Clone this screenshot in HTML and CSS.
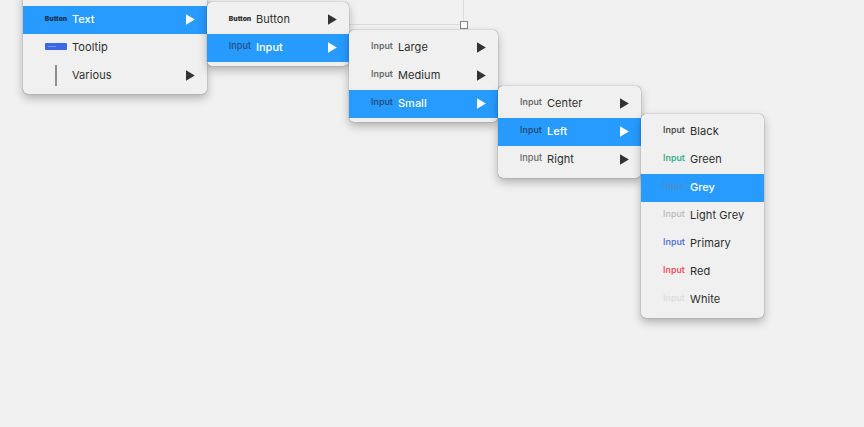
FILE: index.html
```html
<!DOCTYPE html>
<html lang="en">
<head>
<meta charset="utf-8">
<title>Symbol menu</title>
<link rel="stylesheet" href="styles.css">
</head>
<body>
<svg class="arrow-def" width="0" height="0"><symbol id="arrow" viewBox="0 0 9 11"><path d="M0 .3 8.8 5.5 0 10.7Z" fill="currentColor"/></symbol></svg>
<main class="canvas">
  <div class="artboard"><i class="handle"></i></div>

  <ul class="menu menu-root">
    <li class="sliver"></li>
    <li class="item selected"><span class="thumb bold">Button</span><span class="label">Text</span><svg class="arrow"><use href="#arrow"/></svg></li>
    <li class="item"><span class="thumb shape"><i class="tooltip-preview"></i></span><span class="label">Tooltip</span></li>
    <li class="item"><span class="thumb shape"><i class="divider-preview"></i></span><span class="label">Various</span><svg class="arrow"><use href="#arrow"/></svg></li>
  </ul>

  <ul class="menu menu-text">
    <li class="item"><span class="thumb bold">Button</span><span class="label">Button</span><svg class="arrow"><use href="#arrow"/></svg></li>
    <li class="item selected"><span class="thumb large">Input</span><span class="label">Input</span><svg class="arrow"><use href="#arrow"/></svg></li>
  </ul>

  <ul class="menu menu-size">
    <li class="item"><span class="thumb">Input</span><span class="label">Large</span><svg class="arrow"><use href="#arrow"/></svg></li>
    <li class="item"><span class="thumb">Input</span><span class="label">Medium</span><svg class="arrow"><use href="#arrow"/></svg></li>
    <li class="item selected"><span class="thumb">Input</span><span class="label">Small</span><svg class="arrow"><use href="#arrow"/></svg></li>
  </ul>

  <ul class="menu menu-align">
    <li class="item"><span class="thumb">Input</span><span class="label">Center</span><svg class="arrow"><use href="#arrow"/></svg></li>
    <li class="item selected"><span class="thumb">Input</span><span class="label">Left</span><svg class="arrow"><use href="#arrow"/></svg></li>
    <li class="item"><span class="thumb large">Input</span><span class="label">Right</span><svg class="arrow"><use href="#arrow"/></svg></li>
  </ul>

  <ul class="menu menu-color">
    <li class="item"><span class="thumb black">Input</span><span class="label">Black</span></li>
    <li class="item"><span class="thumb green">Input</span><span class="label">Green</span></li>
    <li class="item selected"><span class="thumb grey">Input</span><span class="label">Grey</span></li>
    <li class="item"><span class="thumb light-grey">Input</span><span class="label">Light Grey</span></li>
    <li class="item"><span class="thumb primary">Input</span><span class="label">Primary</span></li>
    <li class="item"><span class="thumb red">Input</span><span class="label">Red</span></li>
    <li class="item"><span class="thumb white">Input</span><span class="label">White</span></li>
  </ul>
</main>
</body>
</html>
```
FILE: styles.css
```css
* { box-sizing: border-box; }
body {
  margin: 0;
  background: #f1f1f1;
  font-family: Inter, "Liberation Sans", sans-serif;
  color: #2e2e2e;
}
.arrow-def { position: absolute; }
.canvas { position: relative; width: 864px; height: 427px; overflow: hidden; }

.artboard {
  position: absolute;
  left: 200px;
  top: -10px;
  width: 264px;
  height: 35px;
  border: solid #dcdcdc;
  border-width: 0 1px 1px 0;
}
.handle {
  position: absolute;
  right: -5px;
  bottom: -5px;
  width: 8px;
  height: 8px;
  background: #fff;
  border: 1px solid #888;
}

.menu {
  position: absolute;
  margin: 0;
  padding: 4px 0;
  list-style: none;
  background: #f0f0f0;
  border-radius: 5px;
  box-shadow: 0 0 1px rgba(0, 0, 0, .6), 0 4px 10px rgba(0, 0, 0, .28);
}
.menu-root { left: 23px; top: -10px; width: 184px; padding-top: 0; }
.menu-text { left: 207px; top: 2px; width: 142px; }
.menu-size { left: 349px; top: 30px; width: 149px; }
.menu-align { left: 498px; top: 86px; width: 143px; }
.menu-color { left: 641px; top: 114px; width: 123px; }

.sliver { height: 16px; }
.item {
  display: flex;
  align-items: center;
  height: 28px;
  padding: 0 12px 0 22px;
}
.item.selected { background: #279bff; }
.thumb {
  display: flex;
  justify-content: center;
  align-items: center;
  width: 22px;
  height: 20px;
  margin-right: 5px;
  padding-bottom: 5px;
  font-size: 8.8px;
  font-weight: 600;
  color: #6a6a6a;
}
.thumb.shape { padding-bottom: 3px; }
.selected .thumb { color: #235180; }
.thumb.large { font-size: 9.2px; font-weight: 500; }
.thumb.bold { font-size: 6.7px; font-weight: 900; padding-bottom: 3px; color: #333; }
.selected .thumb.bold { color: #143456; }
.thumb.black { color: #505050; }
.thumb.green { color: #3fae8a; }
.selected .thumb.grey { color: #4b8fcb; }
.thumb.light-grey { color: #c0c0c0; }
.thumb.primary { color: #5c77dc; }
.thumb.red { color: #f0525c; }
.thumb.white { color: #dedede; }
.label {
  flex: 1;
  padding-bottom: 2px;
  font-size: 11px;
  line-height: 14px;
  letter-spacing: .08px;
  white-space: nowrap;
}
.selected .label { color: #fff; font-weight: 500; letter-spacing: 0; }
.arrow { width: 9px; height: 11px; margin-bottom: 1px; color: #333; }
.selected .arrow { color: #fff; }
.tooltip-preview {
  width: 22px;
  height: 7px;
  border-radius: 1px;
  background: linear-gradient(#6f91f5, #6f91f5) 3px 3px / 8px 1px no-repeat, #3868e8;
}
.divider-preview { flex: none; width: 2px; height: 21px; margin-top: 1px; background: #8e8e8e; }
```
